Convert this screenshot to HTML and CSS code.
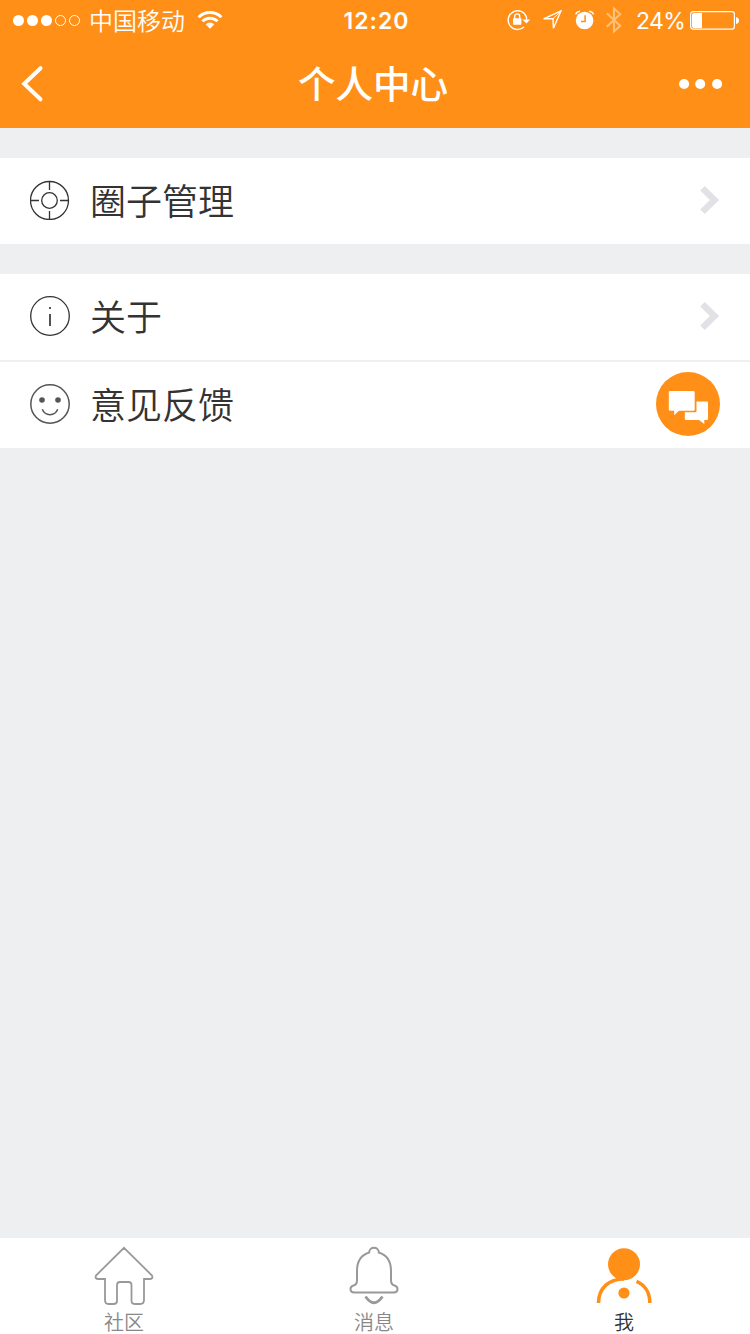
FILE: index.html
```html
<!DOCTYPE html>
<html lang="zh-CN">
<head>
<meta charset="utf-8">
<title>个人中心</title>
<link rel="stylesheet" href="styles.css">
</head>
<body>
<div class="screen">
  <header class="header">
    <div class="status">
      <div class="status-left">
        <svg class="signal" width="68" height="12" viewBox="0 0 68 12"><g fill="#fff"><circle cx="5.5" cy="5.5" r="5.5"/><circle cx="19.5" cy="5.5" r="5.5"/><circle cx="33.5" cy="5.5" r="5.5"/></g><g fill="none" stroke="#fff"><circle cx="47.5" cy="5.5" r="5"/><circle cx="61.5" cy="5.5" r="5"/></g></svg>
        <span class="carrier">中国移动</span>
        <svg class="wifi" width="26" height="18" viewBox="0 0 26 18"><g fill="none" stroke="#fff" stroke-width="3"><path d="M1.6 6.2A16.3 16.3 0 0 1 24.4 6.2"/><path d="M5.4 10.3A10.8 10.8 0 0 1 20.6 10.3"/></g><path d="M8.7 13.3Q13 9.9 17.3 13.3L13 17.8Z" fill="#fff"/></svg>
      </div>
      <span class="clock">12:20</span>
      <div class="status-right">
        <svg class="lock" width="24" height="22" viewBox="0 0 24 22"><path d="M17.2 17.8A9.4 9.4 0 1 1 19.5 8.2V12" fill="none" stroke="#fff" stroke-width="1.4"/><path d="M15.5 10.4H23.3L19.4 14.4Z" fill="#fff"/><rect x="6" y="9.2" width="8.4" height="6.6" rx=".6" fill="#fff"/><path d="M7.7 10V7.4a2.5 2.5 0 0 1 5 0V10" fill="none" stroke="#fff" stroke-width="1.4"/></svg>
        <svg class="location" width="20" height="20" viewBox="0 0 20 20"><path d="M19 .8L1.6 8.8H11L11.4 18.2Z" fill="none" stroke="#fff" stroke-width="1.4"/><path d="M19 .8L11 8.8" stroke="#fff" stroke-width="1"/></svg>
        <svg class="alarm" width="20" height="20" viewBox="0 0 20 20"><circle cx="9.6" cy="10.5" r="8.8" fill="#fff"/><path d="M.7 4.4Q1.5 1.6 5 1.2M18.5 4.4Q17.7 1.6 14.2 1.2" fill="none" stroke="#fff" stroke-width="1.5"/><path d="M10.1 5.3V11.5H6" fill="none" stroke="#ff8f17" stroke-width="1.5"/></svg>
        <svg class="bluetooth" width="16" height="28" viewBox="0 0 16 28"><path d="M.8 7.2L14.2 19.8L8 25.5V2.5L14.2 8.2L.8 20.8" fill="none" stroke="#ffc07a" stroke-width="2"/></svg>
        <span class="percent">24%</span>
        <svg class="battery" width="50" height="20" viewBox="0 0 50 20"><rect x=".6" y="1.6" width="43.8" height="17.6" rx="2.6" fill="none" stroke="#fff" stroke-width="1.2"/><path d="M2 5a2 2 0 0 1 2-2H12V18H4a2 2 0 0 1-2-2Z" fill="#fff"/><path d="M46 7Q49 7.5 49 10.5T46 14Z" fill="#fff"/></svg>
      </div>
    </div>
    <nav class="navbar">
      <svg width="24" height="38" viewBox="0 0 24 38"><path d="M20.5 3.2L4.2 18.7L20.5 34.3" fill="none" stroke="#fff" stroke-width="4" stroke-linecap="round" stroke-linejoin="miter"/></svg>
      <h1 class="title">个人中心</h1>
      <svg class="more" width="44" height="10" viewBox="0 0 44 10" fill="#fff"><circle cx="5.1" cy="5" r="5"/><circle cx="21.2" cy="5" r="5"/><circle cx="38.1" cy="5" r="5"/></svg>
    </nav>
  </header>

  <main class="content">
    <section class="group">
      <div class="row">
        <svg class="row-icon" width="40" height="40" viewBox="0 0 40 40" fill="none" stroke="#333" stroke-width="1.3"><circle cx="19.5" cy="20.5" r="19"/><circle cx="19.5" cy="20.5" r="7.8"/><path d="M19.5 1.5V10M19.5 31V39.5M.5 20.5H9M30 20.5H38.5"/></svg>
        <span class="label">圈子管理</span>
        <svg class="chevron" width="20" height="30" viewBox="0 0 20 30"><path d="M2.5 3.2L14.5 15L2.5 26.8" fill="none" stroke="#e1e1e6" stroke-width="6.5"/></svg>
      </div>
    </section>
    <section class="group">
      <div class="row">
        <svg class="row-icon" width="40" height="40" viewBox="0 0 40 40"><circle cx="20" cy="20" r="19.3" fill="none" stroke="#333" stroke-width="1.3"/><path d="M20 18V30" stroke="#333" stroke-width="1.7"/><circle cx="20" cy="12" r="1.1" fill="#333"/></svg>
        <span class="label">关于</span>
        <svg class="chevron" width="20" height="30" viewBox="0 0 20 30"><path d="M2.5 3.2L14.5 15L2.5 26.8" fill="none" stroke="#e1e1e6" stroke-width="6.5"/></svg>
      </div>
      <div class="row">
        <svg class="row-icon" width="40" height="40" viewBox="0 0 40 40"><g fill="none" stroke="#555" stroke-width="1.5"><circle cx="20" cy="20" r="19.2"/><path d="M12.3 25.3C15 32.4 25 32.4 27.7 25.3"/></g><circle cx="12" cy="16" r="2.8" fill="#555"/><circle cx="28" cy="16" r="2.8" fill="#555"/></svg>
        <span class="label">意见反馈</span>
        <svg width="64" height="64" viewBox="0 0 64 64"><circle cx="32" cy="32" r="32" fill="#ff8f17"/><path d="M40.5 29.5H51Q52 29.5 52 30.5V47Q52 48 51 48H48.3V52L43 48H30Q28.8 48 28.8 47V40.3H39Q40.5 40.3 40.5 38.8Z" fill="#fff"/><path d="M14 19H37.5Q38.7 19 38.7 20.2V37.6Q38.7 38.8 37.5 38.8H23L18.2 43.2V38.8H14Q12.8 38.8 12.8 37.6V20.2Q12.8 19 14 19Z" fill="#fff"/></svg>
      </div>
    </section>
  </main>

  <footer class="tabs">
    <div class="tab">
      <svg width="60" height="60" viewBox="0 0 60 60"><path d="M30 1.8L58 29.5Q59.5 33 55.5 33H50V54Q50 58 46 58H41.5Q37.5 58 37.5 55V39Q37.5 36 34.5 36H26Q23 36 23 39V55Q23 58 19.5 58H14.5Q11 58 11 54V33H4.5Q.5 33 2 29.5Z" fill="none" stroke="#999" stroke-width="1.8"/></svg>
      <span>社区</span>
    </div>
    <div class="tab">
      <svg width="60" height="60" viewBox="0 0 60 60" fill="none" stroke="#999"><path d="M25.2 6.5C25.2 .2 34.8 .2 34.8 6.5C43 9 47 16 47 25V34Q47 38.8 50.5 39.5Q53.5 40.5 53.5 43Q53.5 46.5 49.5 46.5H10.5Q6.5 46.5 6.5 43Q6.5 40.5 9.5 39.5Q13 38.8 13 34V25C13 16 17 9 25.2 6.5Z" stroke-width="2"/><path d="M21.5 50.5Q30 63 38.5 50.5" stroke-width="2.8"/></svg>
      <span>消息</span>
    </div>
    <div class="tab active">
      <svg width="60" height="60" viewBox="0 0 60 60"><g fill="#ff8f17"><circle cx="30" cy="18.3" r="16"/><circle cx="30" cy="47" r="5.6"/></g><path d="M4.5 57C4.5 42 15 33 30 33M42.5 35.3C51 39 56 47 55.8 57" fill="none" stroke="#ff8f17" stroke-width="3.5"/></svg>
      <span>我</span>
    </div>
  </footer>
</div>
</body>
</html>
```

FILE: styles.css
```css
* { box-sizing: border-box; }
body {
  margin: 0;
  font-family: "Noto Sans CJK SC", sans-serif;
  background: #eeeff1;
}
svg { display: block; flex: none; }
.screen {
  width: 750px;
  height: 1334px;
  display: flex;
  flex-direction: column;
}
.header {
  height: 128px;
  background: #ff8f17;
  color: #fff;
}
.status {
  height: 40px;
  padding: 0 10px 0 13px;
  display: grid;
  grid-template-columns: 1fr 66px 1fr;
  align-items: center;
}
.status-left, .status-right { display: flex; align-items: center; height: 40px; }
.status-right { justify-content: flex-end; }
.carrier {
  margin: 0 12px 0 8px;
  font-size: 24px;
  line-height: 40px;
  font-weight: 350;
}
.signal { margin-top: 2px; }
.clock {
  font: 600 23px/38px Inter, sans-serif;
  letter-spacing: 1px;
  white-space: nowrap;
  text-align: center;
  padding-top: 2px;
}
.lock { margin-right: 11px; }
.location { margin-right: 13px; }
.alarm { margin-right: 11px; }
.bluetooth { margin-right: 14px; }
.percent {
  width: 49px;
  padding-top: 2px;
  font: 400 23px/38px Inter, sans-serif;
  letter-spacing: -0.6px;
  white-space: nowrap;
}
.battery { margin-left: 5px; }
.navbar {
  height: 88px;
  padding: 0 27px 0 20px;
  display: flex;
  align-items: center;
  justify-content: space-between;
}
.title {
  margin: -4px 0 0 23px;
  font-size: 37.5px;
  line-height: 84px;
  font-weight: 500;
}
.content { flex: 1; }
.group {
  margin-top: 30px;
  background: #fff;
}
.row {
  height: 86px;
  padding: 0 30px 2px;
  display: flex;
  align-items: center;
}
.row + .row {
  height: 88px;
  border-top: 2px solid #eeeff1;
}
.label {
  flex: 1;
  margin-left: 20px;
  padding-bottom: 2px;
  font-size: 36px;
  line-height: 82px;
  font-weight: 350;
  color: #333;
}
.tabs {
  height: 96px;
  background: #fff;
  display: grid;
  grid-template-columns: repeat(3, 1fr);
}
.tab {
  padding: 8px 2px 0 0;
  display: flex;
  flex-direction: column;
  align-items: center;
  font-size: 20px;
  line-height: 32px;
  font-weight: 350;
  color: #888;
}
.tab.active { color: #333; }
```
